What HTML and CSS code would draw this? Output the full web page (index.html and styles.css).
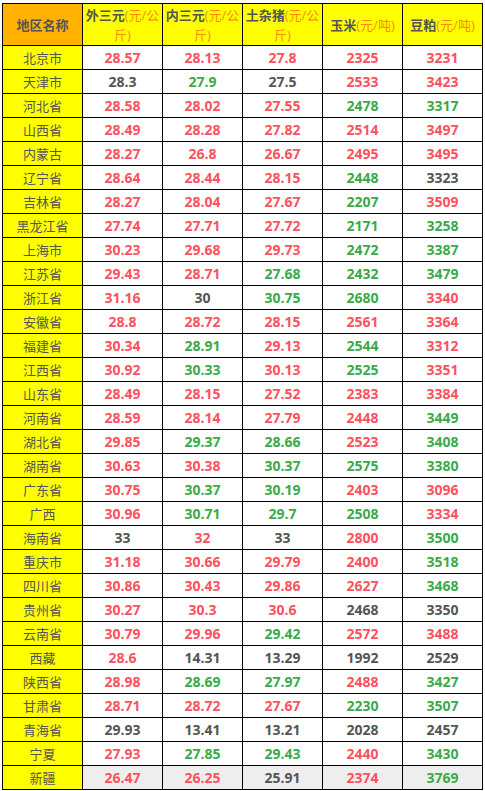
FILE: index.html
```html
<!DOCTYPE html>
<html lang="zh">
<head>
<meta charset="utf-8">
<link rel="stylesheet" href="styles.css">
</head>
<body>
<table class="price">
<colgroup><col class="c"><col class="c"><col class="c"><col class="c"><col class="c"><col class="c"></colgroup>
<thead>
<tr class="head">
<th class="corner">地区名称</th>
<th>外三元<span class="unit">(元/公斤)</span></th>
<th>内三元<span class="unit">(元/公斤)</span></th>
<th>土杂猪<span class="unit">(元/公斤)</span></th>
<th>玉米<span class="unit">(元/吨)</span></th>
<th>豆粕<span class="unit">(元/吨)</span></th>
</tr>
</thead>
<tbody>
<tr><th>北京市</th><td class="r">28.57</td><td class="r">28.13</td><td class="r">27.8</td><td class="r">2325</td><td class="r">3231</td></tr>
<tr><th>天津市</th><td class="n">28.3</td><td class="g">27.9</td><td class="n">27.5</td><td class="r">2533</td><td class="r">3423</td></tr>
<tr><th>河北省</th><td class="r">28.58</td><td class="r">28.02</td><td class="r">27.55</td><td class="g">2478</td><td class="g">3317</td></tr>
<tr><th>山西省</th><td class="r">28.49</td><td class="r">28.28</td><td class="r">27.82</td><td class="r">2514</td><td class="r">3497</td></tr>
<tr><th>内蒙古</th><td class="r">28.27</td><td class="r">26.8</td><td class="r">26.67</td><td class="r">2495</td><td class="r">3495</td></tr>
<tr><th>辽宁省</th><td class="r">28.64</td><td class="r">28.44</td><td class="r">28.15</td><td class="g">2448</td><td class="n">3323</td></tr>
<tr><th>吉林省</th><td class="r">28.27</td><td class="r">28.04</td><td class="r">27.67</td><td class="g">2207</td><td class="r">3509</td></tr>
<tr><th>黑龙江省</th><td class="r">27.74</td><td class="r">27.71</td><td class="r">27.72</td><td class="g">2171</td><td class="g">3258</td></tr>
<tr><th>上海市</th><td class="r">30.23</td><td class="r">29.68</td><td class="r">29.73</td><td class="g">2472</td><td class="g">3387</td></tr>
<tr><th>江苏省</th><td class="r">29.43</td><td class="r">28.71</td><td class="g">27.68</td><td class="g">2432</td><td class="g">3479</td></tr>
<tr><th>浙江省</th><td class="r">31.16</td><td class="n">30</td><td class="g">30.75</td><td class="g">2680</td><td class="r">3340</td></tr>
<tr><th>安徽省</th><td class="r">28.8</td><td class="r">28.72</td><td class="r">28.15</td><td class="r">2561</td><td class="r">3364</td></tr>
<tr><th>福建省</th><td class="r">30.34</td><td class="g">28.91</td><td class="r">29.13</td><td class="g">2544</td><td class="r">3312</td></tr>
<tr><th>江西省</th><td class="r">30.92</td><td class="g">30.33</td><td class="r">30.13</td><td class="g">2525</td><td class="r">3351</td></tr>
<tr><th>山东省</th><td class="r">28.49</td><td class="r">28.15</td><td class="r">27.52</td><td class="r">2383</td><td class="r">3384</td></tr>
<tr><th>河南省</th><td class="r">28.59</td><td class="r">28.14</td><td class="r">27.79</td><td class="r">2448</td><td class="g">3449</td></tr>
<tr><th>湖北省</th><td class="r">29.85</td><td class="g">29.37</td><td class="g">28.66</td><td class="r">2523</td><td class="g">3408</td></tr>
<tr><th>湖南省</th><td class="r">30.63</td><td class="r">30.38</td><td class="g">30.37</td><td class="g">2575</td><td class="g">3380</td></tr>
<tr><th>广东省</th><td class="r">30.75</td><td class="g">30.37</td><td class="g">30.19</td><td class="r">2403</td><td class="r">3096</td></tr>
<tr><th>广西</th><td class="r">30.96</td><td class="g">30.71</td><td class="g">29.7</td><td class="g">2508</td><td class="r">3334</td></tr>
<tr><th>海南省</th><td class="n">33</td><td class="r">32</td><td class="n">33</td><td class="r">2800</td><td class="g">3500</td></tr>
<tr><th>重庆市</th><td class="r">31.18</td><td class="r">30.66</td><td class="r">29.79</td><td class="r">2400</td><td class="g">3518</td></tr>
<tr><th>四川省</th><td class="r">30.86</td><td class="r">30.43</td><td class="r">29.86</td><td class="r">2627</td><td class="g">3468</td></tr>
<tr><th>贵州省</th><td class="r">30.27</td><td class="r">30.3</td><td class="r">30.6</td><td class="n">2468</td><td class="n">3350</td></tr>
<tr><th>云南省</th><td class="r">30.79</td><td class="r">29.96</td><td class="g">29.42</td><td class="r">2572</td><td class="r">3488</td></tr>
<tr><th>西藏</th><td class="r">28.6</td><td class="n">14.31</td><td class="n">13.29</td><td class="n">1992</td><td class="n">2529</td></tr>
<tr><th>陕西省</th><td class="r">28.98</td><td class="g">28.69</td><td class="g">27.97</td><td class="r">2488</td><td class="g">3427</td></tr>
<tr><th>甘肃省</th><td class="r">28.71</td><td class="r">28.72</td><td class="r">27.67</td><td class="g">2230</td><td class="g">3507</td></tr>
<tr><th>青海省</th><td class="n">29.93</td><td class="n">13.41</td><td class="n">13.21</td><td class="n">2028</td><td class="n">2457</td></tr>
<tr><th>宁夏</th><td class="r">27.93</td><td class="g">27.85</td><td class="g">29.43</td><td class="r">2440</td><td class="g">3430</td></tr>
<tr class="last"><th>新疆</th><td class="r">26.47</td><td class="r">26.25</td><td class="n">25.91</td><td class="r">2374</td><td class="g">3769</td></tr>
</tbody>
</table>
</body>
</html>
```
FILE: styles.css
```css
html, body {
  background: #ffffff;
}
body {
  margin: 3px 0 0 2px;
  font-family: "Noto Sans CJK SC", sans-serif;
}
.price {
  border-collapse: collapse;
  table-layout: fixed;
  width: 481px;
}
.price .c {
  width: 80px;
}
.price th,
.price td {
  border: 1px solid #000;
  padding: 0;
  text-align: center;
  vertical-align: middle;
}
.head {
  height: 42px;
}
.head th {
  background: #ffff00;
  color: #555555;
  font-size: 13px;
  font-weight: 700;
  line-height: 20px;
  padding: 0 1px;
  font-family: "Open Sans", "Noto Sans CJK SC", sans-serif;
}
.head .unit {
  color: #ff8c00;
  font-weight: 400;
}
.head .corner {
  background: #ffb300;
  font-size: 13px;
}
tbody tr {
  height: 24px;
}
tbody th {
  background: #ffff00;
  color: #555555;
  font-size: 13px;
  font-weight: 400;
  line-height: 18px;
}
tbody td {
  font-family: "Open Sans", "Noto Sans CJK SC", sans-serif;
  font-size: 14px;
  font-weight: 700;
  line-height: 18px;
}
.r { color: #ff5160; }
.g { color: #3aaa4a; }
.n { color: #555555; }
.last td {
  background: #eeeeee;
}
```
